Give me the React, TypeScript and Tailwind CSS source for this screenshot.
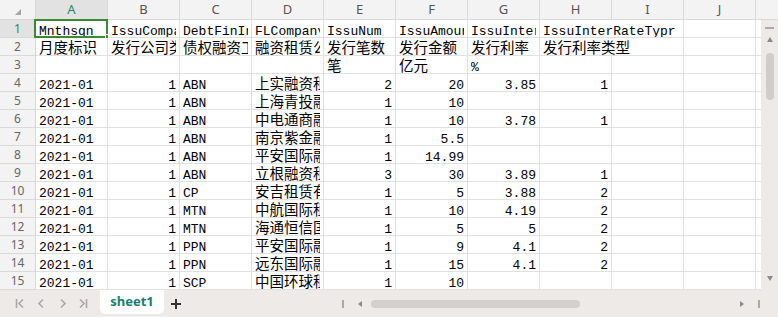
import type { ReactNode } from 'react';

const COLUMNS = ['A', 'B', 'C', 'D', 'E', 'F', 'G', 'H', 'I', 'J'];

// 시트 데이터 (빈 문자열 = 빈 셀)
const ROWS: string[][] = [
  ['Mnthsgn', 'IssuCompanyType', 'DebtFinInstrType', 'FLCompanyName', 'IssuNum', 'IssuAmount', 'IssuInterestRate', 'IssuInterRateTypr', '', ''],
  ['月度标识', '发行公司类型', '债权融资工具类型', '融资租赁公司名称', '发行笔数', '发行金额', '发行利率', '发行利率类型', '', ''],
  ['', '', '', '', '笔', '亿元', '%', '', '', ''],
  ['2021-01', '1', 'ABN', '上实融资租赁有限公司', '2', '20', '3.85', '1', '', ''],
  ['2021-01', '1', 'ABN', '上海青投融资租赁', '1', '10', '', '', '', ''],
  ['2021-01', '1', 'ABN', '中电通商融资租赁', '1', '10', '3.78', '1', '', ''],
  ['2021-01', '1', 'ABN', '南京紫金融资租赁', '1', '5.5', '', '', '', ''],
  ['2021-01', '1', 'ABN', '平安国际融资租赁', '1', '14.99', '', '', '', ''],
  ['2021-01', '1', 'ABN', '立根融资租赁', '3', '30', '3.89', '1', '', ''],
  ['2021-01', '1', 'CP', '安吉租赁有限公司', '1', '5', '3.88', '2', '', ''],
  ['2021-01', '1', 'MTN', '中航国际租赁', '1', '10', '4.19', '2', '', ''],
  ['2021-01', '1', 'MTN', '海通恒信国际租赁', '1', '5', '5', '2', '', ''],
  ['2021-01', '1', 'PPN', '平安国际融资租赁', '1', '9', '4.1', '2', '', ''],
  ['2021-01', '1', 'PPN', '远东国际融资租赁', '1', '15', '4.1', '2', '', ''],
  ['2021-01', '1', 'SCP', '中国环球租赁', '1', '10', '', '', '', ''],
];

// 옆 칸으로 넘쳐 보이는 텍스트 셀 (row-col)
const SPILL = new Set(['0-7', '1-7']);

const isNumber = (v: string) => /^-?\d+(\.\d+)?$/.test(v);
const isCjk = (v: string) => /[\u4e00-\u9fff]/.test(v);

function Cell({ value, wide, children }: { value: string; wide?: boolean; children?: ReactNode }) {
  const font = isCjk(value)
    ? "font-['Noto_Sans_CJK_SC',sans-serif] text-[14.5px] leading-[17px]"
    : "font-['Liberation_Mono',monospace] text-[13px] leading-[17px] pt-[3px]";
  const align = isNumber(value) ? 'text-right' : 'text-left';
  return (
    <div
      className={`relative h-[18px] shrink-0 whitespace-nowrap border-r border-b border-[#e1e1e1] bg-white px-[3px] text-black ${wide ? 'w-[144px]' : 'w-[72px]'}`}
    >
      <div className={`h-full overflow-hidden ${font} ${align}`}>{value}</div>
      {children}
    </div>
  );
}

function SheetRow({ rowIndex, cells }: { rowIndex: number; cells: string[] }) {
  const selected = rowIndex === 0;
  const items: ReactNode[] = [];
  for (let c = 0; c < cells.length; c++) {
    const wide = SPILL.has(`${rowIndex}-${c}`);
    items.push(
      <Cell key={c} value={cells[c]} wide={wide}>
        {rowIndex === 0 && c === 0 && (
          <>
            <div className="pointer-events-none absolute -top-[1px] -left-[2px] h-[19px] w-[74px] border-2 border-[#3a8a31]" />
            <div className="absolute -right-[3px] -bottom-[2px] h-[5px] w-[5px] border border-white bg-[#3a8a31]" />
          </>
        )}
      </Cell>,
    );
    if (wide) c++;
  }

  return (
    <div className="flex h-[18px]">
      <div
        className={`flex h-[18px] w-[36px] shrink-0 items-center justify-center border-r border-b border-[#d9d9d9] font-['Noto_Sans',sans-serif] text-[12px] ${selected ? 'bg-[#e2e2e2] text-[#1d8a6b]' : 'bg-[#f3f3f3] text-[#666]'}`}
      >
        {rowIndex + 1}
      </div>
      {items}
      <div className="h-[18px] w-[5px] shrink-0 border-b border-[#e1e1e1] bg-white" />
    </div>
  );
}

function HeaderRow() {
  return (
    <div className="flex h-[20px] bg-[#f3f3f3] font-['Noto_Sans',sans-serif] text-[13px]">
      <div className="flex h-[20px] w-[36px] shrink-0 items-end justify-end border-r border-b border-[#d9d9d9] pr-[14px] pb-[4px]">
        <svg width="6" height="6" viewBox="0 0 6 6">
          <path d="M6 0 L6 6 L0 6 Z" fill="#a6a6a6" />
        </svg>
      </div>
      {COLUMNS.map((col) => (
        <div
          key={col}
          className={`flex h-[20px] w-[72px] shrink-0 items-center justify-center border-r border-b border-[#d9d9d9] ${col === 'A' ? 'bg-[#e2e2e2] text-[#1d8a6b]' : 'text-[#555]'}`}
        >
          {col}
        </div>
      ))}
      <div className="h-[20px] flex-1 border-b border-[#d9d9d9]" />
    </div>
  );
}

function VerticalScrollbar() {
  return (
    <div className="flex w-[17px] shrink-0 flex-col items-center bg-[#eeeae8]">
      <div className="mt-[7px] h-[2px] w-[9px] bg-[#aaa]" />
      <svg className="mt-[8px]" width="6" height="5" viewBox="0 0 6 5">
        <path d="M3 0 L6 5 L0 5 Z" fill="#8a8a8a" />
      </svg>
      <div className="mt-[11px] h-[47px] w-[8px] rounded-full bg-[#d1cdcb]" />
      <div className="flex-1" />
      <svg className="mb-[9px]" width="6" height="5" viewBox="0 0 6 5">
        <path d="M0 0 L6 0 L3 5 Z" fill="#8a8a8a" />
      </svg>
    </div>
  );
}

function NavIcon({ d }: { d: string }) {
  return (
    <svg width="10" height="11" viewBox="0 0 10 11" fill="none" stroke="#a8a8a8" strokeWidth="1.6">
      <path d={d} />
    </svg>
  );
}

function SheetTabs() {
  return (
    <div className="flex h-[27px] items-center bg-[#eeeae8]">
      <div className="ml-[15px] flex items-center">
        <NavIcon d="M1.5 1 V10 M8 1.5 L4 5.5 L8 9.5" />
        <div className="ml-[12px]">
          <NavIcon d="M6 1.5 L2 5.5 L6 9.5" />
        </div>
        <div className="ml-[11px]">
          <NavIcon d="M3 1.5 L7 5.5 L3 9.5" />
        </div>
        <div className="ml-[10px]">
          <NavIcon d="M2 1.5 L6 5.5 L2 9.5 M8.5 1 V10" />
        </div>
      </div>
      <div className="ml-[12px] flex h-[24px] w-[64px] items-center justify-center self-start rounded-b-[5px] bg-white pb-[1px] font-['Noto_Sans',sans-serif] text-[13px] font-bold text-[#16806c]">
        sheet1
      </div>
      <svg className="ml-[7px]" width="10" height="10" viewBox="0 0 10 10" stroke="#333" strokeWidth="2">
        <path d="M5 0 V10 M0 5 H10" />
      </svg>
      <div className="flex-1" />
      <div className="h-[8px] w-[2px] bg-[#a8a8a8]" />
      <svg className="ml-[14px]" width="4" height="6" viewBox="0 0 4 6">
        <path d="M4 0 L4 6 L0 3 Z" fill="#8a8a8a" />
      </svg>
      <div className="ml-[9px] h-[8px] w-[209px] rounded-full bg-[#d4d0ce]" />
      <div className="flex-1" />
      <svg width="4" height="6" viewBox="0 0 4 6">
        <path d="M0 0 L0 6 L4 3 Z" fill="#8a8a8a" />
      </svg>
      <div className="mr-[18px] ml-[14px] h-[8px] w-[2px] bg-[#a8a8a8]" />
    </div>
  );
}

export default function App() {
  return (
    <div className="flex h-[317px] w-[778px] flex-col overflow-hidden bg-white">
      <HeaderRow />
      <div className="flex h-[270px]">
        <div className="flex w-[761px] shrink-0 flex-col">
          {ROWS.map((cells, i) => (
            <SheetRow key={i} rowIndex={i} cells={cells} />
          ))}
        </div>
        <VerticalScrollbar />
      </div>
      <SheetTabs />
    </div>
  );
}
